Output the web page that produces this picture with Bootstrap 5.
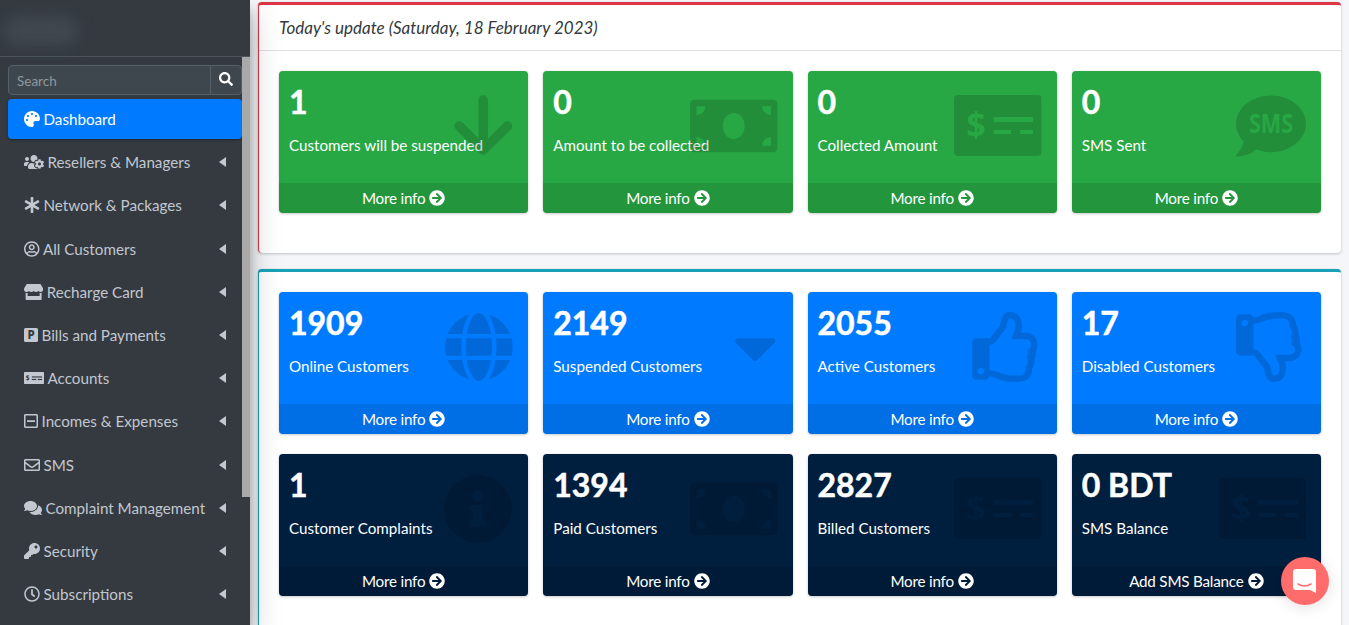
<!DOCTYPE html>
<html lang="en">
<head>
<meta charset="utf-8">
<title>Dashboard</title>
<link rel="stylesheet" href="https://cdn.jsdelivr.net/npm/bootstrap@5.3.0/dist/css/bootstrap.min.css">
<style>
html,body{height:100%;overflow:hidden}
body{font-family:"Lato","Liberation Sans",sans-serif;font-size:16px;background:#f4f6f9;color:#212529}
.app-shell{height:625px;overflow:hidden}
.side-panel{width:250px;flex:0 0 250px;background:#343a40;box-shadow:0 14px 28px rgba(0,0,0,.25),0 10px 10px rgba(0,0,0,.22);position:relative;z-index:5;height:625px;overflow:hidden}
.brand-strip{height:57px;border-bottom:1px solid #4b545c;padding:16px 0 0 4px}
.brand-blur{width:74px;height:30px;border-radius:14px;background:#41474e;filter:blur(7px)}
.side-scroll{width:8px;flex:0 0 8px}
.side-thumb{height:440px;background:#a9a9a9}
.side-body{width:242px;flex:0 0 242px;padding:8px 0 0 8px}
.search-row{height:30px;margin-bottom:4px}
.search-row .form-control{height:30px;min-height:30px;background:#3f474e;border:1px solid #56606a;color:#fff;font-size:13.5px;padding:4px 8px 2px;border-radius:4px 0 0 4px;box-shadow:none}
.search-row .form-control::placeholder{color:#8f979e}
.search-btn{width:32px;flex:0 0 32px;background:#3f474e;border:1px solid #56606a;border-left:1px solid #56606a;border-radius:0 4px 4px 0;padding:0;display:flex;align-items:center;justify-content:center;height:30px;margin-left:-1px}
.search-btn svg{width:14px;height:14px;fill:#fff;margin-top:-3px}
.side-link{display:flex;align-items:center;gap:3.5px;height:40px;padding:0 16px;margin-bottom:3.2px;color:#c2c7d0;text-decoration:none;border-radius:4px;white-space:nowrap;fill:currentColor;font-size:15.2px}
.side-text{padding-top:1px}
.side-link.is-on{background:#007bff;color:#fff;box-shadow:0 1px 3px rgba(0,0,0,.12),0 1px 2px rgba(0,0,0,.24)}
.side-link svg.si{height:16px;flex:none}
.side-link .side-cut{fill:#343a40}
.side-caret{margin-left:auto;width:0;height:0;border-top:5px solid transparent;border-bottom:5px solid transparent;border-right:7px solid #c2c7d0}
.main-area{padding:2px 8px 0;min-width:0;height:625px;overflow:hidden}
.panel-card{border-radius:4px;border:0;border-left:1px solid;border-top:3px solid;box-shadow:0 0 1px rgba(0,0,0,.125),0 1px 3px rgba(0,0,0,.2);margin-bottom:16px;background:#fff}
.panel-red{border-color:#dc3545}
.panel-teal{border-color:#17a2b8}
.panel-head{height:46px;border-bottom:1px solid rgba(0,0,0,.125);padding:0 20px;display:flex;align-items:center;font-style:italic;font-size:17px;color:#343a40;background:transparent}
.panel-body{padding:20px}
.stat-row{--bs-gutter-x:15px;--bs-gutter-y:0}
.stat-box{position:relative;height:142px;margin-bottom:20px;border-radius:4px;color:#fff;box-shadow:0 0 1px rgba(0,0,0,.125),0 1px 3px rgba(0,0,0,.2);background:var(--bx);display:flex;flex-direction:column;overflow:hidden}
.bx-green{--bx:#28a745}
.bx-blue{--bx:#007bff}
.bx-navy{--bx:#001f3f}
.stat-inner{padding:10px;flex:1}
.stat-num{font-size:32px;font-weight:700;line-height:42px;margin:0 0 10px;-webkit-text-stroke:.5px #fff}
.stat-label{margin:0;font-size:15.2px;line-height:24px}
.stat-foot{height:30px;padding-top:1px;background:rgba(0,0,0,.1);color:#fff;text-decoration:none;display:flex;align-items:center;justify-content:center;gap:4px;font-size:15.2px;letter-spacing:-.2px;fill:#fff}
.stat-foot svg{width:16px;height:16px;margin-top:-1px}
.stat-icon{position:absolute;top:20px;right:15px;height:70px;fill:rgba(0,0,0,.15);color:rgba(0,0,0,.15)}
.cut-fill{fill:var(--bx);font-family:"Noto Sans",sans-serif;font-weight:700}
.chat-bubble{position:absolute;left:1281px;top:557px;width:48px;height:48px;border-radius:50%;background:#ff6c6c;box-shadow:0 2px 16px rgba(0,0,0,.12);display:flex;align-items:center;justify-content:center;z-index:10}
</style>
</head>
<body>
<svg width="0" height="0" class="position-absolute" aria-hidden="true">
<defs>
<symbol id="i-arrow" viewBox="0 0 448 512"><path fill="none" stroke="currentColor" stroke-width="70" stroke-linecap="round" stroke-linejoin="round" d="M229 66V431M53 256L229 431L406 256"/></symbol>
<symbol id="i-bill" viewBox="0 0 640 512"><path fill-rule="evenodd" d="M608 64H32C14.33 64 0 78.33 0 96v320c0 17.67 14.33 32 32 32h576c17.67 0 32-14.33 32-32V96c0-17.67-14.33-32-32-32zM48 400v-64c35.35 0 64 28.65 64 64H48zm0-224v-64h64c0 35.35-28.65 64-64 64zm272 176c-44.19 0-80-42.99-80-96 0-53.02 35.82-96 80-96s80 42.98 80 96c0 53.03-35.83 96-80 96zm272 48h-64c0-35.35 28.65-64 64-64v64zm0-224c-35.35 0-64-28.65-64-64h64v64z"/></symbol>
<symbol id="i-check" viewBox="0 0 640 512"><rect x="0" y="29" width="640" height="446" rx="30"/><rect class="cut-fill" x="290" y="190" width="288" height="36"/><rect class="cut-fill" x="290" y="285" width="127" height="30"/><rect class="cut-fill" x="483" y="285" width="95" height="30"/><text class="cut-fill" x="161" y="336" font-size="250" text-anchor="middle">$</text></symbol>
<symbol id="i-sms" viewBox="0 0 512 512"><path d="M256 32C114.6 32 0 125.100 0 240c0 49.600 21.400 95 57 130.700C44.500 421.100 2.700 466 2.200 466.500c-2.200 2.300-2.800 5.700-1.500 8.700 1.300 3 4.100 4.800 7.300 4.800 66.300 0 116-31.800 140.600-51.400 32.700 12.300 69 19.400 107.400 19.400 141.400 0 256-93.100 256-208S397.400 32 256 32z"/><text class="cut-fill" x="256" y="304" font-size="195" text-anchor="middle" textLength="322" lengthAdjust="spacingAndGlyphs">SMS</text></symbol>
<symbol id="i-globe" viewBox="0 0 496 512"><path d="M336.500 160C322 70.700 287.800 8 248 8s-74 62.700-88.500 152h177zM152 256c0 22.200 1.200 43.500 3.300 64h185.300c2.100-20.500 3.300-41.800 3.300-64s-1.200-43.500-3.300-64H155.300c-2.100 20.500-3.300 41.800-3.300 64zm324.700-96c-28.600-67.900-86.500-120.400-158-141.600 24.400 33.800 41.200 84.700 50 141.600h108zM177.200 18.400C105.800 39.600 47.800 92.100 19.300 160h108c8.700-56.900 25.500-107.800 49.900-141.600zM487.400 192H372.700c2.100 21 3.300 42.500 3.300 64s-1.200 43-3.300 64h114.600c5.500-20.500 8.600-41.800 8.600-64s-3.100-43.500-8.500-64zM120 256c0-21.500 1.200-43 3.300-64H8.600C3.200 212.500 0 233.800 0 256s3.200 43.500 8.600 64h114.600c-2-21-3.200-42.500-3.200-64zm39.500 96c14.500 89.300 48.700 152 88.500 152s74-62.700 88.500-152h-177zm159.300 141.600c71.400-21.200 129.400-73.700 158-141.600h-108c-8.800 56.900-25.600 107.800-50 141.600zM19.300 352c28.600 67.900 86.500 120.400 158 141.600-24.400-33.800-41.200-84.700-50-141.600h-108z"/></symbol>
<symbol id="i-caret" viewBox="0 0 310 512"><path d="M21 192h254c17.800 0 26.700 21.500 14.100 34.100L162 354.800c-7.800 7.800-20.500 7.800-28.300 0L7 226.100C-5.600 213.500 3.200 192 21 192z"/></symbol>
<symbol id="i-up" viewBox="0 0 512 512"><path fill-rule="evenodd" d="M466.270 286.690C475.040 271.840 480 256 480 236.850c0-44.015-37.218-85.580-85.820-85.580H357.700c4.920-12.810 8.850-28.130 8.850-46.540C366.550 31.936 328.860 0 271.280 0c-61.607 0-58.093 94.933-71.760 108.600-22.747 22.747-49.615 66.447-68.760 83.400H32c-17.673 0-32 14.327-32 32v240c0 17.673 14.327 32 32 32h64c14.893 0 27.408-10.174 30.978-23.950 44.509 1.001 75.060 39.940 177.802 39.940 7.220 0 15.220.01 22.220.01 77.117 0 111.986-39.423 112.940-95.330 13.319-18.425 20.299-43.122 17.340-66.990 9.854-18.452 13.664-40.343 8.990-62.990zm-61.750 53.830c12.560 21.130 1.260 49.410-13.940 57.570 7.700 48.780-17.608 65.900-53.120 65.900h-37.820c-71.639 0-118.029-37.820-171.640-37.820V240h10.920c28.360 0 67.980-70.890 94.540-97.460 28.360-28.360 18.910-75.630 37.820-94.540 47.270 0 47.270 32.980 47.270 56.730 0 39.170-28.360 56.720-28.360 94.540h103.990c21.110 0 37.730 18.910 37.820 37.820.09 18.900-12.820 37.810-31.730 37.810 20.200 21.800 2.690 52.020-.01 59.640zM88 432c0 13.255-10.745 24-24 24s-24-10.745-24-24 10.745-24 24-24 24 10.745 24 24z"/></symbol>
<symbol id="i-down" viewBox="0 0 512 512"><g transform="translate(0 512) scale(1 -1)"><use href="#i-up" width="512" height="512"/></g></symbol>
<symbol id="i-info" viewBox="0 0 512 512"><path d="M256 8C119.043 8 8 119.083 8 256c0 136.997 111.043 248 248 248s248-111.003 248-248C504 119.083 392.957 8 256 8zm0 110c23.196 0 42 18.804 42 42s-18.804 42-42 42-42-18.804-42-42 18.804-42 42-42zm56 254c0 6.627-5.373 12-12 12h-88c-6.627 0-12-5.373-12-12v-24c0-6.627 5.373-12 12-12h12v-64h-12c-6.627 0-12-5.373-12-12v-24c0-6.627 5.373-12 12-12h64c6.627 0 12 5.373 12 12v100h12c6.627 0 12 5.373 12 12v24z"/></symbol>
<symbol id="i-go" viewBox="0 0 512 512"><path d="M256 8c137 0 248 111 248 248S393 504 256 504 8 393 8 256 119 8 256 8zm-28.900 143.600l75.500 72.400H120c-13.300 0-24 10.700-24 24v16c0 13.300 10.700 24 24 24h182.600l-75.500 72.400c-9.700 9.300-9.900 24.800-.4 34.300l11 10.900c9.400 9.400 24.600 9.400 33.900 0L404.300 273c9.400-9.400 9.400-24.600 0-33.900L271.600 106.300c-9.400-9.400-24.600-9.400-33.900 0l-11 11c-9.400 9.500-9.200 25 .4 34.300z"/></symbol>
</defs>
</svg>

<div class="app-shell d-flex position-relative">
  <aside class="side-panel">
    <div class="brand-strip"><div class="brand-blur"></div></div>
    <div class="d-flex">
      <nav class="side-body">
        <div class="search-row d-flex">
          <input class="form-control" type="search" placeholder="Search" aria-label="Search">
          <button class="search-btn" type="button" aria-label="Search"><svg viewBox="0 0 512 512"><path d="M505 442.700L405.300 343c-4.500-4.500-10.600-7-17-7H372c27.600-35.300 44-79.700 44-128C416 93.100 322.900 0 208 0S0 93.100 0 208s93.100 208 208 208c48.300 0 92.700-16.400 128-44v16.300c0 6.400 2.500 12.500 7 17l99.700 99.700c9.400 9.400 24.600 9.400 33.900 0l28.300-28.300c9.400-9.400 9.400-24.600.1-34zM208 336c-70.700 0-128-57.200-128-128 0-70.700 57.200-128 128-128 70.700 0 128 57.200 128 128 0 70.700-57.200 128-128 128z"/></svg></button>
        </div>
        <a href="#" class="side-link is-on"><svg class="si" viewBox="0 0 512 512"><path d="M204.300 5C104.900 24.400 24.800 104.300 5.200 203.400c-37 187 131.700 326.400 258.800 306.700 41.200-6.400 61.400-54.600 42.500-91.700-23.100-45.400 9.900-98.400 60.900-98.400h79.700c35.800 0 64.800-29.600 64.900-65.300C511.500 97.100 368.100-26.900 204.300 5zM96 320c-17.700 0-32-14.300-32-32s14.300-32 32-32 32 14.300 32 32-14.300 32-32 32zm32-128c-17.700 0-32-14.300-32-32s14.300-32 32-32 32 14.300 32 32-14.300 32-32 32zm128-64c-17.700 0-32-14.300-32-32s14.300-32 32-32 32 14.300 32 32-14.300 32-32 32zm128 64c-17.700 0-32-14.300-32-32s14.300-32 32-32 32 14.300 32 32-14.300 32-32 32z"/></svg><span class="side-text">Dashboard</span></a>
        <a href="#" class="side-link"><svg class="si" viewBox="0 0 640 512"><path d="M610.500 341.300c2.600-14.100 2.600-28.500 0-42.600l25.800-14.900c3-1.700 4.300-5.200 3.300-8.500-6.700-21.600-18.200-41.200-33.200-57.400-2.300-2.500-6-3.100-9-1.400l-25.800 14.900c-10.900-9.300-23.400-16.500-36.900-21.300v-29.800c0-3.400-2.400-6.400-5.700-7.100-22.300-5-45-4.800-66.200 0-3.300.7-5.700 3.700-5.700 7.100v29.800c-13.500 4.800-26 12-36.900 21.300l-25.800-14.900c-2.900-1.700-6.700-1.100-9 1.400-15 16.200-26.500 35.800-33.200 57.400-1 3.300.4 6.800 3.300 8.500l25.800 14.900c-2.600 14.100-2.600 28.500 0 42.600l-25.800 14.900c-3 1.700-4.300 5.200-3.300 8.500 6.700 21.600 18.200 41.100 33.200 57.400 2.300 2.500 6 3.100 9 1.400l25.800-14.900c10.900 9.300 23.400 16.500 36.900 21.300v29.800c0 3.400 2.400 6.400 5.700 7.100 22.300 5 45 4.800 66.200 0 3.300-.7 5.700-3.700 5.700-7.100v-29.800c13.500-4.800 26-12 36.900-21.300l25.800 14.900c2.900 1.700 6.700 1.100 9-1.400 15-16.200 26.500-35.800 33.200-57.400 1-3.300-.4-6.800-3.300-8.500l-25.800-14.900zM496 368.500c-26.800 0-48.500-21.800-48.500-48.500s21.800-48.500 48.500-48.500 48.500 21.800 48.500 48.500-21.700 48.500-48.500 48.500zM96 224c35.300 0 64-28.700 64-64s-28.700-64-64-64-64 28.700-64 64 28.700 64 64 64zm224 32c1.900 0 3.700-.5 5.600-.6 8.300-21.700 20.500-42.100 36.300-59.200 7.400-8 17.900-12.600 28.900-12.600 6.900 0 13.700 1.800 19.600 5.300l7.900 4.600c.8-.5 1.600-.9 2.400-1.400 7-14.600 11.200-30.800 11.200-48 0-61.900-50.100-112-112-112S208 82.100 208 144c0 61.900 50.100 112 112 112zm105.200 194.500c-2.300-1.200-4.600-2.600-6.800-3.900-8.200 4.800-15.300 9.800-27.500 9.800-10.900 0-21.400-4.600-28.900-12.600-18.300-19.800-32.300-43.900-40.200-69.600-10.700-34.500 24.900-49.700 25.800-50.300-.1-2.600-.1-5.200 0-7.800l-7.900-4.600c-3.800-2.200-7-5-9.800-8.100-3.300.2-6.500.6-9.800.6-24.600 0-47.600-6-68.500-16h-8.300C179.600 288 128 339.600 128 403.200V432c0 26.500 21.500 48 48 48h255.400c-3.700-6-6.200-12.800-6.200-20.300v-9.200zM173.100 274.600C161.500 263.100 145.600 256 128 256H64c-35.300 0-64 28.700-64 64v32c0 17.700 14.300 32 32 32h65.900c6.300-47.400 34.900-87.300 75.200-109.400z"/></svg><span class="side-text">Resellers &amp; Managers</span><span class="side-caret"></span></a>
        <a href="#" class="side-link"><svg class="si" viewBox="0 0 512 512"><path d="M478.210 334.093L336 256l142.210-78.093c11.795-6.477 15.961-21.384 9.232-33.037l-19.480-33.741c-6.728-11.653-21.720-15.499-33.227-8.523L296 186.718l3.475-162.204C299.763 11.061 288.937 0 275.480 0h-38.960c-13.456 0-24.283 11.061-23.994 24.514L216 186.718 77.265 102.607c-11.506-6.976-26.499-3.130-33.227 8.523l-19.480 33.741c-6.728 11.653-2.562 26.560 9.233 33.037L176 256 33.790 334.093c-11.795 6.477-15.961 21.384-9.232 33.037l19.480 33.741c6.728 11.653 21.721 15.499 33.227 8.523L216 325.282l-3.475 162.204C212.237 500.939 223.064 512 236.520 512h38.961c13.456 0 24.283-11.061 23.995-24.514L296 325.282l138.735 84.111c11.506 6.976 26.499 3.130 33.227-8.523l19.480-33.741c6.728-11.653 2.563-26.559-9.232-33.036z"/></svg><span class="side-text">Network &amp; Packages</span><span class="side-caret"></span></a>
        <a href="#" class="side-link"><svg class="si" viewBox="0 0 496 512"><path d="M248 104c-53 0-96 43-96 96s43 96 96 96 96-43 96-96-43-96-96-96zm0 144c-26.500 0-48-21.500-48-48s21.500-48 48-48 48 21.500 48 48-21.500 48-48 48zm0-240C111 8 0 119 0 256s111 248 248 248 248-111 248-248S385 8 248 8zm0 448c-49.700 0-95.100-18.300-130.100-48.400 14.900-23 40.400-38.600 69.600-39.500 20.800 6.400 40.600 9.600 60.500 9.600s39.700-3.100 60.500-9.600c29.200 1 54.700 16.500 69.600 39.500-35 30.100-80.400 48.400-130.100 48.400zm162.700-84.100c-24.400-31.400-62.100-51.900-105.100-51.900-10.200 0-26 9.600-57.600 9.600-31.500 0-47.400-9.600-57.600-9.600-42.900 0-80.600 20.500-105.100 51.900C61.900 339.200 48 299.200 48 256c0-110.300 89.700-200 200-200s200 89.700 200 200c0 43.200-13.900 83.200-37.300 115.900z"/></svg><span class="side-text">All Customers</span><span class="side-caret"></span></a>
        <a href="#" class="side-link"><svg class="si" viewBox="0 0 616 512"><path d="M602 118.600L537.100 15C531.300 5.700 521 0 510 0H106C95 0 84.700 5.700 78.900 15L14 118.600c-33.900 54.100-3.800 129.300 59.600 137.900 4.600.6 9.200.9 13.700.9 29.600 0 55.800-13 73.800-33.100 18 20.100 44.300 33.100 73.800 33.100 29.600 0 55.800-13 73.800-33.100 18 20.100 44.300 33.100 73.800 33.100 29.600 0 55.800-13 73.800-33.100 18.100 20.100 44.300 33.100 73.800 33.100 4.600 0 9.100-.3 13.700-.9 63.600-8.500 93.700-83.700 59.700-137.900zM529.500 288c-10 0-19.900-1.500-29.500-3.800V384H116v-99.800c-9.600 2.200-19.500 3.800-29.500 3.800-6 0-12.100-.4-18-1.200-5.600-.8-11.100-2.100-16.400-3.600V480c0 17.700 14.300 32 32 32h448c17.700 0 32-14.300 32-32V283.200c-5.400 1.600-10.800 2.900-16.400 3.600-6.100.8-12.100 1.200-18.200 1.200z"/></svg><span class="side-text">Recharge Card</span><span class="side-caret"></span></a>
        <a href="#" class="side-link"><svg class="si" viewBox="0 0 448 512"><rect y="32" width="448" height="448" rx="48"/><text class="side-cut" x="224" y="386" font-size="370" font-weight="800" text-anchor="middle" font-family="Noto Sans, sans-serif">P</text></svg><span class="side-text">Bills and Payments</span><span class="side-caret"></span></a>
        <a href="#" class="side-link"><svg class="si" viewBox="0 0 640 512"><rect y="64" width="640" height="384" rx="24"/><text class="side-cut" x="115" y="335" font-size="210" font-weight="700" text-anchor="middle" font-family="Noto Sans, sans-serif">$</text><rect class="side-cut" x="250" y="205" width="330" height="36"/><rect class="side-cut" x="250" y="285" width="140" height="36"/><rect class="side-cut" x="440" y="285" width="140" height="36"/></svg><span class="side-text">Accounts</span><span class="side-caret"></span></a>
        <a href="#" class="side-link"><svg class="si" viewBox="0 0 448 512"><path d="M108 284c-6.600 0-12-5.400-12-12v-32c0-6.600 5.400-12 12-12h232c6.600 0 12 5.400 12 12v32c0 6.600-5.400 12-12 12H108zM448 80v352c0 26.500-21.500 48-48 48H48c-26.500 0-48-21.500-48-48V80c0-26.500 21.500-48 48-48h352c26.500 0 48 21.500 48 48zm-48 346V86c0-3.300-2.700-6-6-6H54c-3.300 0-6 2.700-6 6v340c0 3.300 2.700 6 6 6h340c3.300 0 6-2.700 6-6z"/></svg><span class="side-text">Incomes &amp; Expenses</span><span class="side-caret"></span></a>
        <a href="#" class="side-link"><svg class="si" viewBox="0 0 512 512"><path d="M464 64H48C21.490 64 0 85.490 0 112v288c0 26.510 21.490 48 48 48h416c26.510 0 48-21.490 48-48V112c0-26.510-21.490-48-48-48zm0 48v40.805c-22.422 18.259-58.168 46.651-134.587 106.490-16.841 13.247-50.201 45.072-73.413 44.701-23.208.375-56.579-31.459-73.413-44.701C106.180 199.465 70.425 171.067 48 152.805V112h416zM48 400V214.398c22.914 18.251 55.409 43.862 104.938 82.646 21.857 17.205 60.134 55.186 103.062 54.955 42.717.231 80.509-37.199 103.053-54.947 49.528-38.783 82.032-64.401 104.947-82.653V400H48z"/></svg><span class="side-text">SMS</span><span class="side-caret"></span></a>
        <a href="#" class="side-link"><svg class="si" viewBox="0 0 576 512"><path d="M416 192c0-88.400-93.100-160-208-160S0 103.600 0 192c0 34.300 14.100 65.900 38 92-13.400 30.200-35.500 54.200-35.800 54.500-2.200 2.300-2.800 5.700-1.500 8.700S4.800 352 8 352c36.600 0 66.900-12.300 88.700-25 32.200 15.700 70.300 25 111.300 25 114.900 0 208-71.600 208-160zm122 220c23.900-26 38-57.700 38-92 0-66.900-53.500-124.200-129.300-148.100.9 6.600 1.300 13.300 1.300 20.100 0 105.900-107.700 192-240 192-10.800 0-21.300-.8-31.700-1.900C207.800 439.600 281.800 480 368 480c41 0 79.100-9.200 111.300-25 21.800 12.700 52.100 25 88.700 25 3.200 0 6.100-1.900 7.300-4.800 1.300-3 .7-6.400-1.500-8.700-.3-.3-22.400-24.200-35.800-54.500z"/></svg><span class="side-text">Complaint Management</span><span class="side-caret"></span></a>
        <a href="#" class="side-link"><svg class="si" viewBox="0 0 512 512"><path fill-rule="evenodd" d="M512 176.001C512 273.203 433.202 352 336 352c-11.220 0-22.190-1.062-32.827-3.069l-24.012 27.014A23.999 23.999 0 0 1 261.223 384H224v40c0 13.255-10.745 24-24 24h-40v40c0 13.255-10.745 24-24 24H24c-13.255 0-24-10.745-24-24v-78.059c0-6.365 2.529-12.470 7.029-16.971l161.802-161.802C163.108 213.814 160 195.271 160 176 160 78.798 238.797.001 335.999 0 433.488-.001 512 78.511 512 176.001zM336 128c0 26.510 21.490 48 48 48s48-21.490 48-48-21.490-48-48-48-48 21.490-48 48z"/></svg><span class="side-text">Security</span><span class="side-caret"></span></a>
        <a href="#" class="side-link"><svg class="si" viewBox="0 0 512 512"><path d="M256 8C119 8 8 119 8 256s111 248 248 248 248-111 248-248S393 8 256 8zm0 448c-110.500 0-200-89.500-200-200S145.500 56 256 56s200 89.500 200 200-89.500 200-200 200zm61.800-104.400l-84.900-61.700c-3.100-2.300-4.900-5.900-4.900-9.700V116c0-6.600 5.400-12 12-12h32c6.600 0 12 5.400 12 12v141.700l66.800 48.600c5.400 3.900 6.500 11.400 2.600 16.800L334.600 349c-3.900 5.300-11.400 6.500-16.800 2.600z"/></svg><span class="side-text">Subscriptions</span><span class="side-caret"></span></a>
      </nav>
      <div class="side-scroll"><div class="side-thumb"></div></div>
    </div>
  </aside>

  <main class="main-area flex-grow-1">
    <section class="panel-card panel-red">
      <div class="panel-head">Today's update (Saturday, 18 February 2023)</div>
      <div class="panel-body">
        <div class="row stat-row">
          <div class="col-3"><div class="stat-box bx-green"><div class="stat-inner"><h3 class="stat-num">1</h3><p class="stat-label">Customers will be suspended</p></div><svg class="stat-icon" width="61.250" height="70"><use href="#i-arrow"/></svg><a href="#" class="stat-foot">More info <svg><use href="#i-go"/></svg></a></div></div>
          <div class="col-3"><div class="stat-box bx-green"><div class="stat-inner"><h3 class="stat-num">0</h3><p class="stat-label">Amount to be collected</p></div><svg class="stat-icon" width="87.500" height="70"><use href="#i-bill"/></svg><a href="#" class="stat-foot">More info <svg><use href="#i-go"/></svg></a></div></div>
          <div class="col-3"><div class="stat-box bx-green"><div class="stat-inner"><h3 class="stat-num">0</h3><p class="stat-label">Collected Amount</p></div><svg class="stat-icon" width="87.500" height="70"><use href="#i-check"/></svg><a href="#" class="stat-foot">More info <svg><use href="#i-go"/></svg></a></div></div>
          <div class="col-3"><div class="stat-box bx-green"><div class="stat-inner"><h3 class="stat-num">0</h3><p class="stat-label">SMS Sent</p></div><svg class="stat-icon" width="70" height="70"><use href="#i-sms"/></svg><a href="#" class="stat-foot">More info <svg><use href="#i-go"/></svg></a></div></div>
        </div>
      </div>
    </section>
    <section class="panel-card panel-teal">
      <div class="panel-body">
        <div class="row stat-row">
          <div class="col-3"><div class="stat-box bx-blue"><div class="stat-inner"><h3 class="stat-num">1909</h3><p class="stat-label">Online Customers</p></div><svg class="stat-icon" width="67.800" height="70"><use href="#i-globe"/></svg><a href="#" class="stat-foot">More info <svg><use href="#i-go"/></svg></a></div></div>
          <div class="col-3"><div class="stat-box bx-blue"><div class="stat-inner"><h3 class="stat-num">2149</h3><p class="stat-label">Suspended Customers</p></div><svg class="stat-icon" width="42.400" height="70"><use href="#i-caret"/></svg><a href="#" class="stat-foot">More info <svg><use href="#i-go"/></svg></a></div></div>
          <div class="col-3"><div class="stat-box bx-blue"><div class="stat-inner"><h3 class="stat-num">2055</h3><p class="stat-label">Active Customers</p></div><svg class="stat-icon" width="70" height="70"><use href="#i-up"/></svg><a href="#" class="stat-foot">More info <svg><use href="#i-go"/></svg></a></div></div>
          <div class="col-3"><div class="stat-box bx-blue"><div class="stat-inner"><h3 class="stat-num">17</h3><p class="stat-label">Disabled Customers</p></div><svg class="stat-icon" width="70" height="70"><use href="#i-down"/></svg><a href="#" class="stat-foot">More info <svg><use href="#i-go"/></svg></a></div></div>
        </div>
        <div class="row stat-row">
          <div class="col-3"><div class="stat-box bx-navy"><div class="stat-inner"><h3 class="stat-num">1</h3><p class="stat-label">Customer Complaints</p></div><svg class="stat-icon" width="70" height="70"><use href="#i-info"/></svg><a href="#" class="stat-foot">More info <svg><use href="#i-go"/></svg></a></div></div>
          <div class="col-3"><div class="stat-box bx-navy"><div class="stat-inner"><h3 class="stat-num">1394</h3><p class="stat-label">Paid Customers</p></div><svg class="stat-icon" width="87.500" height="70"><use href="#i-bill"/></svg><a href="#" class="stat-foot">More info <svg><use href="#i-go"/></svg></a></div></div>
          <div class="col-3"><div class="stat-box bx-navy"><div class="stat-inner"><h3 class="stat-num">2827</h3><p class="stat-label">Billed Customers</p></div><svg class="stat-icon" width="87.500" height="70"><use href="#i-check"/></svg><a href="#" class="stat-foot">More info <svg><use href="#i-go"/></svg></a></div></div>
          <div class="col-3"><div class="stat-box bx-navy"><div class="stat-inner"><h3 class="stat-num">0 BDT</h3><p class="stat-label">SMS Balance</p></div><svg class="stat-icon" width="87.500" height="70"><use href="#i-check"/></svg><a href="#" class="stat-foot">Add SMS Balance <svg><use href="#i-go"/></svg></a></div></div>
        </div>
      </div>
    </section>
  </main>

  <div class="chat-bubble"><svg width="26" height="28" viewBox="0 0 26 28"><path fill="#fff" d="M4 2h17a3 3 0 0 1 3 3v21l-6-3H4a3 3 0 0 1-3-3V5a3 3 0 0 1 3-3z"/><path fill="none" stroke="#ff6c6c" stroke-width="1.500" stroke-linecap="round" d="M6 17c4 2.500 9 2.500 13 0"/></svg></div>
</div>
<script src="https://cdn.jsdelivr.net/npm/bootstrap@5.3.0/dist/js/bootstrap.bundle.min.js"></script>
</body>
</html>
